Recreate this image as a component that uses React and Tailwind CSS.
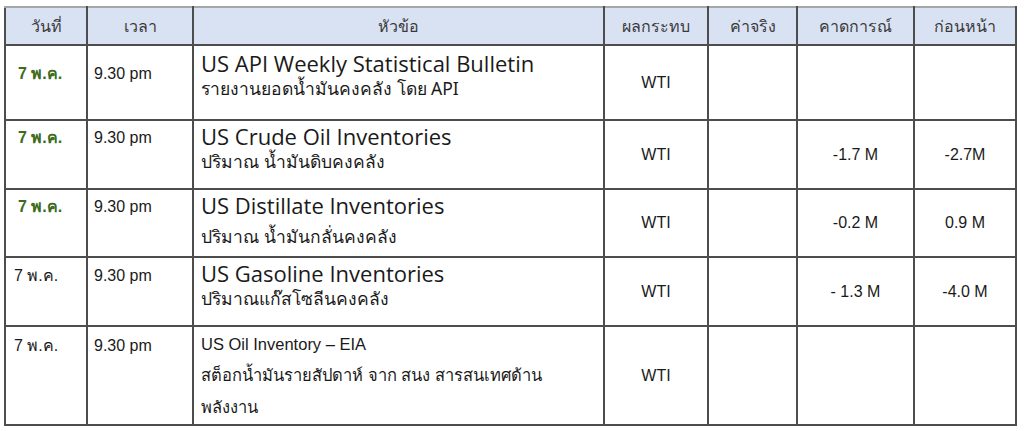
import React from "react";

const rows = [
  {
    date: "7 พ.ค.",
    bold: true,
    time: "9.30 pm",
    title: "US API Weekly Statistical Bulletin",
    sub: "รายงานยอดน้ำมันคงคลัง โดย API",
    h: "h-[75px]",
    pt: "pt-[16px]",
    forecast: "",
    prev: "",
  },
  {
    date: "7 พ.ค.",
    bold: true,
    time: "9.30 pm",
    title: "US Crude Oil Inventories",
    sub: "ปริมาณ น้ำมันดิบคงคลัง",
    h: "h-[69px]",
    pt: "pt-[5px]",
    forecast: "-1.7 M",
    prev: "-2.7M",
  },
  {
    date: "7 พ.ค.",
    bold: true,
    time: "9.30 pm",
    title: "US Distillate Inventories",
    sub: "ปริมาณ น้ำมันกลั่นคงคลัง",
    h: "h-[68px]",
    pt: "pt-[5px]",
    forecast: "-0.2 M",
    prev: "0.9 M",
    gap: true,
  },
  {
    date: "7 พ.ค.",
    bold: false,
    time: "9.30 pm",
    title: "US Gasoline Inventories",
    sub: "ปริมาณแก๊สโซลีนคงคลัง",
    h: "h-[69px]",
    pt: "pt-[6px]",
    forecast: "- 1.3 M",
    prev: "-4.0 M",
  },
];

const cell = "border-2 border-[#4d4d4d] align-top";
const sans = "font-['Liberation_Sans',Arial,sans-serif]";

export default function App() {
  return (
    <div className="bg-white w-[1024px] h-[431px] pt-[6px] pl-[4px]">
      <table className="border-collapse table-fixed w-[1011px] text-[#1a1a1a]">
        <colgroup>
          <col className="w-[82px]" />
          <col className="w-[106px]" />
          <col className="w-[411px]" />
          <col className="w-[104px]" />
          <col className="w-[89px]" />
          <col className="w-[117px]" />
          <col className="w-[102px]" />
        </colgroup>
        <thead>
          <tr className="h-[38px] bg-[#d9e2f3] text-[16px] text-[#3a3a3a] font-['Noto_Sans',sans-serif]">
            {["วันที่", "เวลา", "หัวข้อ", "ผลกระทบ", "ค่าจริง", "คาดการณ์", "ก่อนหน้า"].map((t) => (
              <th
                key={t}
                className="border-2 border-[#4d4d4d] border-t-[#a6a6a6] font-normal text-center align-middle"
              >
                {t}
              </th>
            ))}
          </tr>
        </thead>
        <tbody>
          {rows.map((r, i) => (
            <tr key={i} className={r.h}>
              <td className={`${cell} ${r.pt} ${sans} text-[16px] ${r.bold ? "font-bold text-[#3d6b21] pl-[12px]" : "pl-[8px]"}`}>
                {r.date}
              </td>
              <td className={`${cell} ${r.pt} ${sans} text-[16px] pl-[6px]`}>{r.time}</td>
              <td className={`${cell} pl-[7px] ${i === 0 ? "pt-[4px]" : "pt-[2px]"}`}>
                <div className="font-['Open_Sans',sans-serif] text-[22px] leading-[27px]">{r.title}</div>
                <div className={`font-['Noto_Sans',sans-serif] text-[17.5px] leading-[22px] ${r.gap ? "mt-[6px]" : ""}`}>
                  {r.sub}
                </div>
              </td>
              <td className={`${cell} !align-middle text-center ${sans} text-[16px]`}>WTI</td>
              <td className={cell}></td>
              <td className={`${cell} !align-middle text-center ${sans} text-[16px]`}>{r.forecast}</td>
              <td className={`${cell} !align-middle text-center ${sans} text-[16px]`}>{r.prev}</td>
            </tr>
          ))}
          <tr className="h-[99px]">
            <td className={`${cell} pt-[7px] pl-[8px] ${sans} text-[16px]`}>7 พ.ค.</td>
            <td className={`${cell} pt-[7px] pl-[6px] ${sans} text-[16px]`}>9.30 pm</td>
            <td className={`${cell} pt-[6px] pl-[7px] ${sans} text-[16.5px] leading-[32px]`}>
              <div className="leading-[22px]">US Oil Inventory – EIA</div>
              <div className="mt-[4px]">สต็อกน้ำมันรายสัปดาห์ จาก สนง สารสนเทศด้าน</div>
              <div>พลังงาน</div>
            </td>
            <td className={`${cell} !align-middle text-center ${sans} text-[16px]`}>WTI</td>
            <td className={cell}></td>
            <td className={cell}></td>
            <td className={cell}></td>
          </tr>
        </tbody>
      </table>
    </div>
  );
}
